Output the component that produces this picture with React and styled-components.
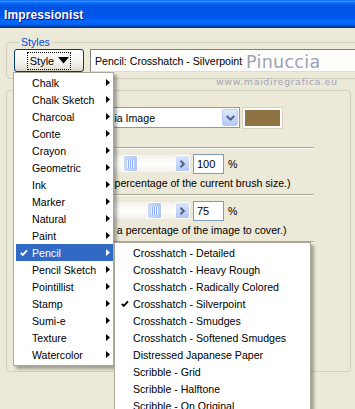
import React from 'react';
import styled, { createGlobalStyle } from 'styled-components';

const GlobalStyle = createGlobalStyle`
  html, body {
    margin: 0;
    padding: 0;
    background: #ece9d8;
    overflow: hidden;
  }
  body {
    font-family: "Liberation Sans", Arial, sans-serif;
    font-size: 10.6px;
    color: #000;
  }
`;

const styleItems = [
  'Chalk', 'Chalk Sketch', 'Charcoal', 'Conte', 'Crayon', 'Geometric', 'Ink',
  'Marker', 'Natural', 'Paint', 'Pencil', 'Pencil Sketch', 'Pointillist',
  'Stamp', 'Sumi-e', 'Texture', 'Watercolor',
];

const pencilItems = [
  'Crosshatch - Detailed',
  'Crosshatch - Heavy Rough',
  'Crosshatch - Radically Colored',
  'Crosshatch - Silverpoint',
  'Crosshatch - Smudges',
  'Crosshatch - Softened Smudges',
  'Distressed Japanese Paper',
  'Scribble - Grid',
  'Scribble - Halftone',
  'Scribble - On Original',
];

function Check({ color = '#000' }) {
  return (
    <svg width="8" height="8" viewBox="0 0 8 8">
      <polyline points="0.8,3.8 2.8,5.8 7,1.4" fill="none" stroke={color} strokeWidth="1.9" />
    </svg>
  );
}

function SubArrow({ color = '#000' }) {
  return (
    <svg width="4" height="7" viewBox="0 0 4 7">
      <polygon points="0,0 4,3.5 0,7" fill={color} />
    </svg>
  );
}

function Chevron({ dir = 'right' }) {
  return dir === 'right' ? (
    <svg width="7" height="8" viewBox="0 0 7 8">
      <polyline points="1.5,0.8 4.8,4 1.5,7.2" fill="none" stroke="#4d6185" strokeWidth="2" />
    </svg>
  ) : dir === 'left' ? (
    <svg width="7" height="8" viewBox="0 0 7 8">
      <polyline points="5.5,0.8 2.2,4 5.5,7.2" fill="none" stroke="#4d6185" strokeWidth="2" />
    </svg>
  ) : (
    <svg width="9" height="6" viewBox="0 0 9 6">
      <polyline points="0.8,1 4.5,4.6 8.2,1" fill="none" stroke="#4d6185" strokeWidth="2" />
    </svg>
  );
}

function ScrollBar({ offset }) {
  return (
    <Scroll>
      <ScrollButton><Chevron dir="left" /></ScrollButton>
      <Track>
        <Thumb $offset={offset}>
          <Grip />
        </Thumb>
      </Track>
      <ScrollButton><Chevron dir="right" /></ScrollButton>
    </Scroll>
  );
}

export default function App() {
  return (
    <>
      <GlobalStyle />
      <Window>
        <TitleBar>
          <Title>Impressionist</Title>
        </TitleBar>
        <Body>
          <Group>
            <Legend>Styles</Legend>
            <StyleRow>
              <StyleButton>
                <Focus>
                  Style
                  <svg width="11" height="7" viewBox="0 0 11 7">
                    <polygon points="0,0 11,0 5.5,6.5" fill="#000" />
                  </svg>
                </Focus>
              </StyleButton>
              <StyleField>Pencil: Crosshatch - Silverpoint</StyleField>
            </StyleRow>
          </Group>

          <Settings>
            <Row>
              <Label>Colors:</Label>
              <Combo>
                <ComboText>Use Media Image</ComboText>
                <ComboButton><Chevron dir="down" /></ComboButton>
              </Combo>
              <Swatch />
            </Row>
            <Separator />
            <Row>
              <Label>Size:</Label>
              <ScrollBar offset={40} />
              <NumberBox>100</NumberBox>
              <Percent>%</Percent>
            </Row>
            <Hint>(Size is a percentage of the current brush size.)</Hint>
            <Separator />
            <Row>
              <Label>Coverage:</Label>
              <ScrollBar offset={64} />
              <NumberBox>75</NumberBox>
              <Percent>%</Percent>
            </Row>
            <Hint>(Cover as a percentage of the image to cover.)</Hint>
            <Separator />
          </Settings>

          <Watermark>Pinuccia</Watermark>
          <WatermarkUrl>www.maidiregrafica.eu</WatermarkUrl>

          <Menu $left={13} $top={44} $width={101}>
            {styleItems.map((item) => (
              <MenuItem key={item} $active={item === 'Pencil'}>
                <CheckSlot>{item === 'Pencil' && <Check color="#fff" />}</CheckSlot>
                <ItemText>{item}</ItemText>
                <SubArrow color={item === 'Pencil' ? '#fff' : '#000'} />
              </MenuItem>
            ))}
          </Menu>

          <Menu $left={114} $top={214} $width={197}>
            {pencilItems.map((item) => (
              <MenuItem key={item}>
                <CheckSlot>{item === 'Crosshatch - Silverpoint' && <Check />}</CheckSlot>
                <ItemText>{item}</ItemText>
              </MenuItem>
            ))}
          </Menu>
        </Body>
      </Window>
    </>
  );
}

const Window = styled.div`
  width: 380px;
  height: 409px;
  overflow: hidden;
`;

const TitleBar = styled.div`
  height: 28px;
  display: flex;
  align-items: center;
  padding-left: 4px;
  background: linear-gradient(
    to bottom,
    #0058ee 0%,
    #3593ff 4%,
    #288eff 6%,
    #127dff 8%,
    #036ffc 10%,
    #0262ee 14%,
    #0057e5 20%,
    #0054e3 24%,
    #0055eb 56%,
    #005bf5 66%,
    #026afe 76%,
    #0062ef 86%,
    #0052d6 92%,
    #0040ab 94%,
    #003092 100%
  );
`;

const Title = styled.span`
  font-family: "Liberation Sans", Arial, sans-serif;
  font-weight: bold;
  font-size: 12px;
  letter-spacing: 0.1px;
  color: #fff;
  text-shadow: 1px 1px 0 #0f1089;
  margin-top: 1px;
`;

const Body = styled.div`
  position: relative;
  padding: 8px 0 0 6px;
  height: 373px;
`;

const Group = styled.fieldset`
  margin: 0;
  padding: 1px 0 6px 7px;
  border: 1px solid #d0d0bf;
  border-radius: 4px;
  min-width: 0;
`;

const Legend = styled.legend`
  margin-left: 5px;
  padding: 0 2px;
  color: #0046d5;
  line-height: 12px;
  font-size: 10.6px;
`;

const StyleRow = styled.div`
  display: flex;
  gap: 6px;
  height: 23px;
`;

const StyleButton = styled.div`
  width: 70px;
  box-sizing: border-box;
  border: 1px solid #003c74;
  border-radius: 3px;
  background: linear-gradient(to bottom, #ffffff 0%, #f4f3ee 60%, #e3e0d3 92%, #d6d0c5 100%);
  display: flex;
  align-items: center;
  justify-content: center;
`;

const Focus = styled.span`
  display: flex;
  align-items: center;
  gap: 4px;
  height: 16px;
  padding: 0 1px 0 2px;
  outline: 1px dotted #000;
  font-size: 11px;
`;

const StyleField = styled.div`
  flex: 1;
  box-sizing: border-box;
  border-top: 1px solid #7f7f7f;
  border-left: 1px solid #7f7f7f;
  border-bottom: 1px solid #e0ddd0;
  background: #fdfdfb;
  padding: 0 4px;
  display: flex;
  align-items: center;
  font-size: 10.6px;
`;

const Settings = styled.div`
  box-sizing: border-box;
  width: 345px;
  height: 282px;
  margin-top: 11px;
  border: 1px solid #d0d0bf;
  border-radius: 4px;
  padding: 16px 0 0 8px;
  display: flex;
  flex-direction: column;
`;

const Row = styled.div`
  display: flex;
  align-items: center;
  height: 21px;
`;

const Label = styled.span`
  width: 53px;
  flex-shrink: 0;
`;

const Combo = styled.div`
  width: 172px;
  height: 21px;
  box-sizing: border-box;
  border: 1px solid #7f9db9;
  background: #fff;
  display: flex;
  align-items: center;
  padding: 1px;
`;

const ComboText = styled.span`
  flex: 1;
  padding-left: 2px;
  font-size: 10.6px;
`;

const ComboButton = styled.span`
  width: 16px;
  height: 17px;
  box-sizing: border-box;
  border: 1px solid #bccbfa;
  border-radius: 2px;
  background: linear-gradient(to bottom, #e2eafe 0%, #c5d5fc 60%, #b4c8f6 100%);
  display: flex;
  align-items: center;
  justify-content: center;
`;

const Swatch = styled.span`
  width: 39px;
  height: 20px;
  margin-left: 3px;
  box-sizing: border-box;
  border: 2px solid #fbfaf6;
  outline: 1px solid #d8d4c4;
  background: #8e7444;
`;

const Hint = styled.div`
  margin: 3px 0 0 53px;
  line-height: 13px;
`;

const Separator = styled.div`
  height: 1px;
  background: #aca899;
  border-bottom: 1px solid #fff;
  margin: 4px 36px 4px 0;
  ${Row} + & {
    margin-top: 19px;
  }
`;

const Scroll = styled.div`
  display: flex;
  width: 122px;
  height: 17px;
`;

const ScrollButton = styled.span`
  width: 15px;
  height: 17px;
  box-sizing: border-box;
  border: 1px solid #fff;
  border-radius: 2px;
  background: linear-gradient(to bottom, #d9e5fd 0%, #c3d4fb 60%, #b2c7f6 100%);
  display: flex;
  align-items: center;
  justify-content: center;
  flex-shrink: 0;
`;

const Track = styled.span`
  flex: 1;
  display: flex;
  align-items: center;
  background: linear-gradient(to bottom, #f3f1ec 0%, #fefefb 50%, #f3f1ec 100%);
`;

const Thumb = styled.span`
  width: 15px;
  height: 17px;
  margin-left: ${(p) => p.$offset}px;
  box-sizing: border-box;
  border: 1px solid #fff;
  border-radius: 2px;
  background: linear-gradient(to right, #c9d8fc 0%, #bccffb 60%, #b0c5f8 100%);
  display: flex;
  align-items: center;
  justify-content: center;
`;

const Grip = styled.span`
  width: 7px;
  height: 8px;
  background: repeating-linear-gradient(
    to right,
    #eef4fe 0px,
    #eef4fe 1px,
    #8cb0f8 1px,
    #8cb0f8 2px
  );
`;

const NumberBox = styled.span`
  width: 31px;
  height: 20px;
  margin-left: 3px;
  box-sizing: border-box;
  border: 1px solid #7f9db9;
  background: #fff;
  display: flex;
  align-items: center;
  padding-left: 3px;
  font-size: 11px;
`;

const Percent = styled.span`
  margin-left: 4px;
`;

const Watermark = styled.div`
  position: absolute;
  left: 246px;
  top: 24px;
  font-family: "DejaVu Sans", Verdana, sans-serif;
  font-size: 17.5px;
  letter-spacing: 0.3px;
  color: #9ea1b6;
  text-shadow: 1px 1px 0 #fff;
`;

const WatermarkUrl = styled.div`
  position: absolute;
  left: 216px;
  top: 48px;
  font-family: "DejaVu Sans", Verdana, sans-serif;
  font-size: 9.5px;
  letter-spacing: 0.6px;
  color: #a3a5b6;
`;

const Menu = styled.div`
  position: absolute;
  left: ${(p) => p.$left}px;
  top: ${(p) => p.$top}px;
  width: ${(p) => p.$width}px;
  box-sizing: border-box;
  border: 1px solid #aca899;
  background: #fff;
  padding: 1px 0 2px 2px;
  box-shadow: 3px 3px 3px rgba(0, 0, 0, 0.32);
`;

const MenuItem = styled.div`
  height: 17px;
  display: flex;
  align-items: center;
  padding-right: 3px;
  background: ${(p) => (p.$active ? '#316ac5' : 'transparent')};
  color: ${(p) => (p.$active ? '#fff' : '#000')};
`;

const CheckSlot = styled.span`
  width: 16px;
  flex-shrink: 0;
  display: flex;
  align-items: center;
  padding-left: 4px;
  box-sizing: border-box;
`;

const ItemText = styled.span`
  flex: 1;
  white-space: nowrap;
  font-size: 10.6px;
`;
